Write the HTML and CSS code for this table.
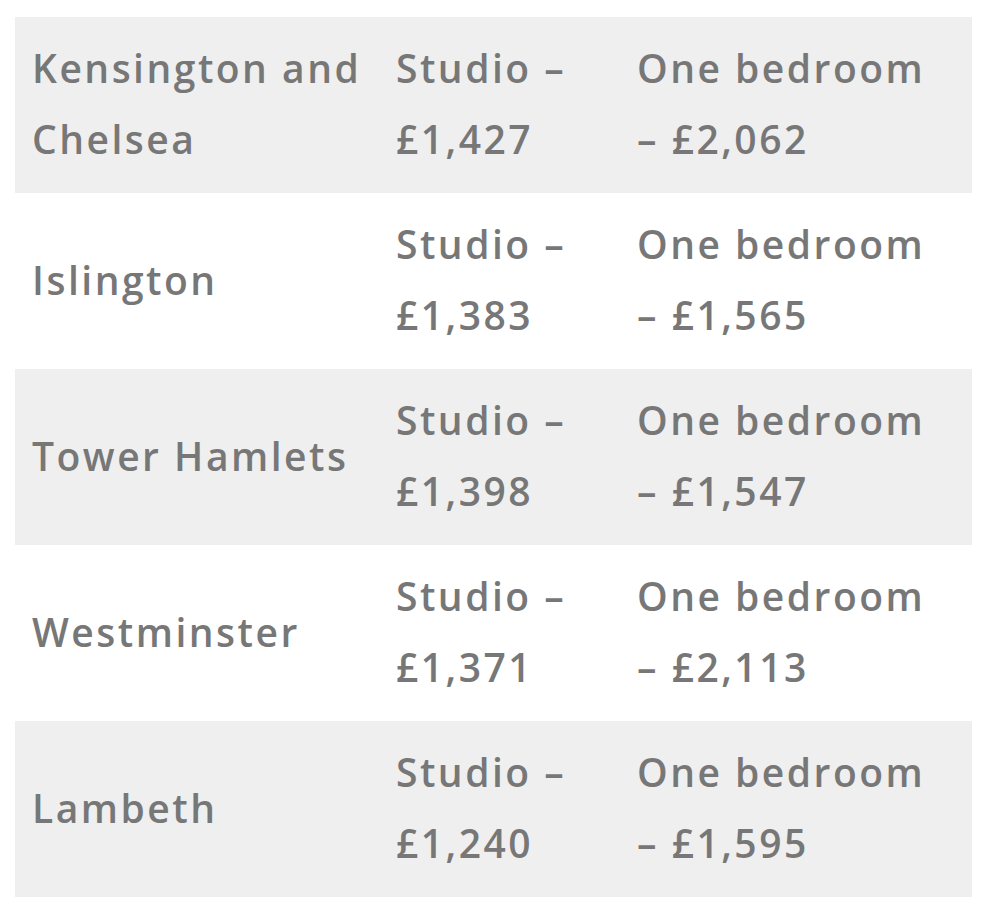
FILE: index.html
```html
<!DOCTYPE html>
<html>
<head>
<meta charset="utf-8">
<link rel="stylesheet" href="styles.css">
</head>
<body>
<table class="rents">
  <colgroup><col class="c1"><col class="c2"><col class="c3"></colgroup>
  <tbody>
    <tr class="shade"><td>Kensington and Chelsea</td><td>Studio – £1,427</td><td>One bedroom –&nbsp;£2,062</td></tr>
    <tr><td>Islington</td><td>Studio – £1,383</td><td>One bedroom –&nbsp;£1,565</td></tr>
    <tr class="shade"><td>Tower Hamlets</td><td>Studio – £1,398</td><td>One bedroom –&nbsp;£1,547</td></tr>
    <tr><td>Westminster</td><td>Studio – £1,371</td><td>One bedroom –&nbsp;£2,113</td></tr>
    <tr class="shade"><td>Lambeth</td><td>Studio – £1,240</td><td>One bedroom –&nbsp;£1,595</td></tr>
  </tbody>
</table>
</body>
</html>
```
FILE: styles.css
```css
html, body { margin: 0; padding: 0; background: #fff; }
body { padding: 17px 16px 0 15px; }
.rents {
  width: 957px;
  border-collapse: collapse;
  table-layout: fixed;
  font-family: "Open Sans", "Liberation Sans", sans-serif;
  font-weight: 600;
  font-size: 39px;
  letter-spacing: 2.5px;
  line-height: 71px;
  color: #777;
}
.c1 { width: 364px; }
.c2 { width: 241px; }
.c3 { width: 352px; }
.rents td {
  padding: 15px 17px 19px 17px;
  vertical-align: middle;
  height: 142px;
}
.rents tr.shade td { background: #efefef; }
```
